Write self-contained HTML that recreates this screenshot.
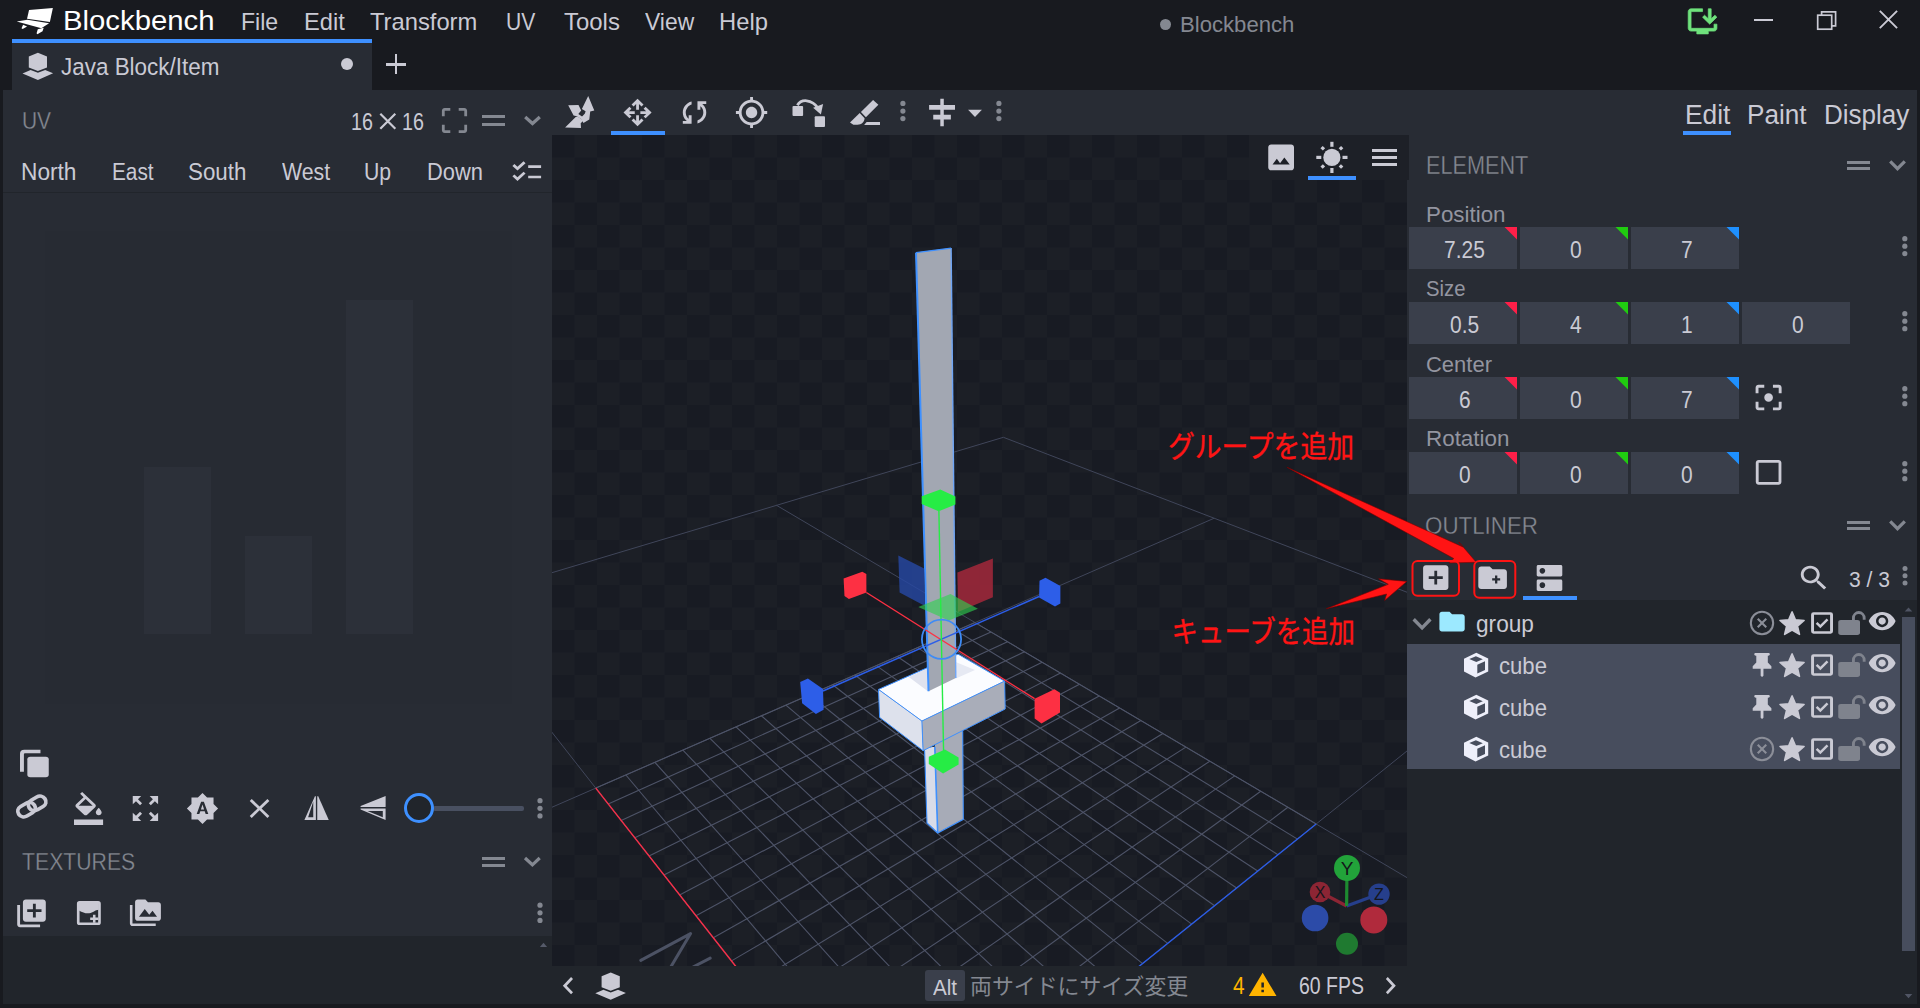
<!DOCTYPE html>
<html lang="en"><head><meta charset="utf-8"><title>Blockbench</title>
<style>
html,body{margin:0;padding:0;background:#181a1f;overflow:hidden}
#r{position:relative;width:1920px;height:1008px;overflow:hidden;font-family:"Liberation Sans","Noto Sans CJK JP",sans-serif;background:#181a1f}
.t{position:absolute;white-space:nowrap;line-height:1em;transform-origin:0 50%;display:block}
.lt{-webkit-text-stroke:0.3px #282c34}
.b{position:absolute}
.i{position:absolute;display:block;overflow:visible}
.jp{font-family:"Liberation Sans","Noto Sans CJK JP",sans-serif}
</style></head>
<body><div id="r">
<div class="b" style="left:0px;top:0px;width:1920px;height:90px;background:#181a1f;"></div>
<div class="b" style="left:12px;top:39px;width:360px;height:51px;background:#282c34;"></div>
<div class="b" style="left:12px;top:38.7px;width:360px;height:4.5px;background:#3e90ff;"></div>
<svg class="i" style="left:0;top:0;width:1px;height:1px;"><polygon points="29.05,9.92 52.86,7.94 49.88,22.02 27.06,18.65" fill="#ffffff"/><polygon points="16.75,21.43 27.46,19.64 49.09,23.21 41.35,28.17" fill="#ffffff"/><polygon points="23.10,24.80 27.06,26.39 22.70,28.97 21.50,28.37" fill="#ffffff"/><polygon points="37.78,29.37 43.73,27.78 42.54,31.35 37.38,34.13 36.59,33.33" fill="#ffffff"/></svg>
<span class="t " style="left:63.0px;top:7.00px;font-size:27.18px;color:#ffffff;transform:scaleX(1.0781);">Blockbench</span>
<span class="t " style="left:241.1px;top:10.00px;font-size:23.84px;color:#cacad4;transform:scaleX(0.9685);">File</span>
<span class="t " style="left:303.7px;top:10.00px;font-size:23.84px;color:#cacad4;transform:scaleX(0.9933);">Edit</span>
<span class="t " style="left:369.5px;top:10.00px;font-size:23.84px;color:#cacad4;transform:scaleX(0.9960);">Transform</span>
<span class="t " style="left:506.4px;top:10.00px;font-size:23.84px;color:#cacad4;transform:scaleX(0.8848);">UV</span>
<span class="t " style="left:564.4px;top:10.00px;font-size:23.84px;color:#cacad4;transform:scaleX(1.0045);">Tools</span>
<span class="t " style="left:644.5px;top:10.00px;font-size:23.84px;color:#cacad4;transform:scaleX(0.9602);">View</span>
<span class="t " style="left:718.5px;top:10.00px;font-size:23.84px;color:#cacad4;transform:scaleX(0.9974);">Help</span>
<div class="b" style="left:1160.4px;top:19.4px;width:10.8px;height:10.8px;border-radius:50%;background:#848891"></div>
<span class="t " style="left:1179.8px;top:14.00px;font-size:21.80px;color:#848891;transform:scaleX(1.0149);">Blockbench</span>
<svg class="i" style="left:0;top:0;width:1px;height:1px;"><polygon points="37.90,52.70 47.00,56.40 47.00,67.40 37.90,70.90 28.80,67.40 28.80,56.40" fill="#cacad4"/><polygon points="22.50,73.50 30.60,69.90 37.90,72.70 45.20,69.90 53.10,73.20 37.90,80.00" fill="#cacad4"/></svg>
<span class="t " style="left:61.2px;top:56.00px;font-size:23.55px;color:#cacad4;transform:scaleX(0.9531);">Java Block/Item</span>
<div class="b" style="left:341.2px;top:58.4px;width:12px;height:12px;border-radius:50%;background:#cacad4"></div>
<div class="b" style="left:386.2px;top:63px;width:19.600000000000023px;height:2.799999999999997px;background:#cacad4;"></div><div class="b" style="left:394.6px;top:54.4px;width:2.7999999999999545px;height:19.6px;background:#cacad4;"></div>
<svg class="i" style="left:0;top:0;width:1px;height:1px;" fill="#6fe27c" color="#6fe27c"><g transform="translate(1685.33,4.62) scale(1.4350,1.3944)"><path d="M20 17H4V5h8V3H4c-1.110 0-2 .890-2 2v12c0 1.100.890 2 2 2h4v2h8v-2h4c1.100 0 2-.900 2-2v-3h-2v3z M17 14l5-5-1.410-1.410L18 10.170V3h-2v7.170l-2.590-2.580L12 9z" stroke="currentColor" stroke-width="0.500" stroke-linejoin="round"/></g></svg>
<div class="b" style="left:1754.2px;top:19px;width:18.799999999999955px;height:2px;background:#cacad4;"></div>
<svg class="i" style="left:0;top:0;width:1px;height:1px;"><g fill="none" stroke="#cacad4" stroke-width="1.7"><rect x="1817.7" y="15.2" width="14" height="14"/><path d="M1821.6 15.2v-3.400h14v14h-3.900"/></g></svg>
<svg class="i" style="left:0;top:0;width:1px;height:1px;"><path d="M1879.800 10.900l17.300 17.300M1897.100 10.900l-17.300 17.300" fill="none" stroke="#cacad4" stroke-width="1.900"/></svg>
<div class="b" style="left:0px;top:90px;width:3px;height:918px;background:#181a1f;"></div>
<div class="b" style="left:3px;top:90px;width:549px;height:846px;background:#282c34;"></div>
<div class="b" style="left:3px;top:936px;width:549px;height:68px;background:#21252b;"></div>
<span class="t lt" style="left:21.9px;top:109.00px;font-size:24.71px;color:#848891;transform:scaleX(0.8477);">UV</span>
<span class="t " style="left:350.8px;top:110.00px;font-size:24.13px;color:#cacad4;transform:scaleX(0.8160);">16</span>
<span class="t " style="left:402.2px;top:110.00px;font-size:24.13px;color:#cacad4;transform:scaleX(0.8160);">16</span>
<svg class="i" style="left:0;top:0;width:1px;height:1px;"><path d="M380.300 113.700l15 15M395.300 113.700l-15 15" stroke="#cacad4" stroke-width="2.200"/></svg>
<svg class="i" style="left:0;top:0;width:1px;height:1px;" fill="#848891" color="#848891"><g transform="translate(437.70,103.97) scale(1.4000,1.3778)"><path d="M3 5v4h2V5h4V3H5c-1.1 0-2 .9-2 2zm2 10H3v4c0 1.1.9 2 2 2h4v-2H5v-4zm14 4h-4v2h4c1.1 0 2-.9 2-2v-4h-2v4zm0-16h-4v2h4v4h2V5c0-1.1-.9-2-2-2z"/></g></svg>
<div class="b" style="left:482.2px;top:115.2px;width:22.69999999999999px;height:3.0px;background:#848891;"></div><div class="b" style="left:482.2px;top:122.5px;width:22.69999999999999px;height:3.0px;background:#848891;"></div>
<svg class="i" style="left:0;top:0;width:1px;height:1px;"><path d="M525.2 117.0L532.5 123.5L539.8 117.0" fill="none" stroke="#848891" stroke-width="3.2" stroke-linejoin="miter"/></svg>
<span class="t " style="left:21.1px;top:160.00px;font-size:23.98px;color:#cacad4;transform:scaleX(0.9463);">North</span>
<span class="t " style="left:112.3px;top:160.00px;font-size:23.98px;color:#cacad4;transform:scaleX(0.8669);">East</span>
<span class="t " style="left:188.1px;top:160.00px;font-size:23.98px;color:#cacad4;transform:scaleX(0.9318);">South</span>
<span class="t " style="left:281.8px;top:160.00px;font-size:23.98px;color:#cacad4;transform:scaleX(0.8894);">West</span>
<span class="t " style="left:364.4px;top:160.00px;font-size:23.98px;color:#cacad4;transform:scaleX(0.8872);">Up</span>
<span class="t " style="left:427.1px;top:160.00px;font-size:23.98px;color:#cacad4;transform:scaleX(0.9117);">Down</span>
<svg class="i" style="left:0;top:0;width:1px;height:1px;" fill="#cacad4" color="#cacad4"><g transform="translate(509.53,156.19) scale(1.4350,1.3006)"><path d="M22 7h-9v2h9V7zm0 8h-9v2h9v-2zM5.54 11L2 7.46l1.41-1.41 2.12 2.12 4.24-4.24 1.41 1.41L5.54 11zm0 8L2 15.46l1.41-1.41 2.12 2.12 4.24-4.24 1.41 1.41L5.54 19z"/></g></svg>
<div class="b" style="left:3px;top:191.5px;width:549px;height:1.5px;background:#21252b;"></div>
<div class="b" style="left:45px;top:231px;width:467px;height:473px;background:#272b33;"></div>
<div class="b" style="left:144px;top:467px;width:67px;height:167px;background:#2c3039;"></div>
<div class="b" style="left:245px;top:536px;width:67px;height:98px;background:#2c3039;"></div>
<div class="b" style="left:346px;top:300px;width:67px;height:334px;background:#2c3039;"></div>
<svg class="i" style="left:0;top:0;width:1px;height:1px;" fill="#cacad4" color="#cacad4"><g transform="translate(15.94,746.69) scale(1.5625,1.4212)"><path d="M2.600 17.700V4.900A2.750 2.750 0 0 1 5.350 2.150H15.700v2.500H5.800a.700.700 0 0 0-.700.700V17.700z"/><rect x="7.300" y="7" width="13.700" height="14.500" rx="1.900"/></g></svg>
<svg class="i" style="left:0;top:0;width:1px;height:1px;" fill="#cacad4" color="#cacad4"><g transform="translate(14.02,789.65) scale(1.4855,1.4040)"><g fill="none" stroke="currentColor" stroke-width="2.600" transform="rotate(-32 12 12)"><rect x="1.600" y="8" width="12.400" height="8" rx="4"/><rect x="10" y="8" width="12.400" height="8" rx="4"/></g></g></svg>
<svg class="i" style="left:0;top:0;width:1px;height:1px;" fill="#cacad4" color="#cacad4"><g transform="translate(71.09,791.90) scale(1.4550,1.3792)"><path d="M16.56 8.94L7.62 0 6.21 1.41l2.38 2.38-5.15 5.15c-.59.59-.59 1.54 0 2.12l5.5 5.5c.29.29.68.44 1.06.44s.77-.15 1.06-.44l5.5-5.5c.59-.58.59-1.53 0-2.12zM5.21 10L10 5.21 14.79 10H5.21zM19 11.5s-2 2.17-2 3.5c0 1.1.9 2 2 2s2-.9 2-2c0-1.33-2-3.5-2-3.5zM2 20h20v4H2z"/></g></svg>
<svg class="i" style="left:0;top:0;width:1px;height:1px;" fill="#cacad4" color="#cacad4"><g transform="translate(128.53,791.83) scale(1.4083,1.3889)"><path d="M15 3l2.3 2.3-2.89 2.87 1.42 1.42L18.7 6.7 21 9V3h-6zM3 9l2.3-2.3 2.87 2.89 1.42-1.42L6.7 5.3 9 3H3v6zm6 12l-2.3-2.3 2.89-2.87-1.42-1.42L5.3 17.3 3 15v6h6zm12-6l-2.3 2.3-2.87-2.89-1.42 1.42 2.89 2.87L15 21h6v-6z"/></g></svg>
<svg class="i" style="left:0;top:0;width:1px;height:1px;" fill="#cacad4" color="#cacad4"><g transform="translate(185.95,792.16) scale(1.3793,1.3660)"><path d="M10.85 12.65h2.3L12 9l-1.15 3.65zM20 8.69V4h-4.69L12 .69 8.69 4H4v4.69L.69 12 4 15.31V20h4.69L12 23.31 15.31 20H20v-4.69L23.31 12 20 8.69zM14.3 16l-.7-2h-3.2l-.7 2H7.8L11 7h2l3.2 9h-1.9z"/></g></svg>
<svg class="i" style="left:0;top:0;width:1px;height:1px;" fill="#cacad4" color="#cacad4"><g transform="translate(242.73,792.25) scale(1.4036,1.3500)"><path d="M19 6.41L17.59 5 12 10.59 6.41 5 5 6.41 10.59 12 5 17.59 6.41 19 12 13.41 17.59 19 19 17.59 13.41 12z"/></g></svg>
<svg class="i" style="left:0;top:0;width:1px;height:1px;" fill="#cacad4" color="#cacad4"><g transform="translate(299.97,791.36) scale(1.3835,1.3971)"><path d="M10.800 3.500h.7v17H3.200z M9.600 7.200L5.900 18.600h3.700z" fill-rule="evenodd"/><path d="M12.500 3.500h.7l7.600 17h-8.300z"/></g></svg>
<svg class="i" style="left:0;top:0;width:1px;height:1px;" fill="#cacad4" color="#cacad4"><g transform="translate(355.45,791.14) scale(1.4706,1.3873)"><path d="M20.500 11.500v-8l-17 7.300v.7z"/><path d="M20.500 12.500v8.300l-17-7.600v-.7z M18.600 14.400H8.200l10.400 4.400z" fill-rule="evenodd"/></g></svg>
<div class="b" style="left:433px;top:805.6px;width:91px;height:5.399999999999977px;background:#495061;border-radius:2px"></div>
<div class="b" style="left:404.1px;top:792.7px;width:30.2px;height:30.2px;border-radius:50%;box-sizing:border-box;border:3.8px solid #3e90ff;background:#21252b"></div>
<svg class="i" style="left:0;top:0;width:1px;height:1px;"><circle cx="540" cy="800.7" r="2.6" fill="#848891"/><circle cx="540" cy="808.3" r="2.6" fill="#848891"/><circle cx="540" cy="815.9" r="2.6" fill="#848891"/></svg>
<span class="t lt" style="left:21.7px;top:850.00px;font-size:24.27px;color:#848891;transform:scaleX(0.8750);">TEXTURES</span>
<div class="b" style="left:482.3px;top:856.7px;width:22.69999999999999px;height:3.0px;background:#848891;"></div><div class="b" style="left:482.3px;top:863.9px;width:22.69999999999999px;height:3.0px;background:#848891;"></div>
<svg class="i" style="left:0;top:0;width:1px;height:1px;"><path d="M525.0 858.0L532.4 864.8L539.7 858.0" fill="none" stroke="#848891" stroke-width="3.2" stroke-linejoin="miter"/></svg>
<svg class="i" style="left:0;top:0;width:1px;height:1px;" fill="#cacad4" color="#cacad4"><g transform="translate(14.34,896.84) scale(1.4300,1.3800)"><path d="M4 6H2v14c0 1.1.9 2 2 2h14v-2H4V6zm16-4H8c-1.1 0-2 .9-2 2v12c0 1.1.9 2 2 2h12c1.1 0 2-.9 2-2V4c0-1.1-.9-2-2-2zm-1 9h-4v4h-2v-4H9V9h4V5h2v4h4v2z"/></g></svg>
<svg class="i" style="left:0;top:0;width:1px;height:1px;" fill="#cacad4" color="#cacad4"><g transform="translate(72.92,897.10) scale(1.3278,1.3333)"><path fill-rule="evenodd" d="M5 3h14a2 2 0 0 1 2 2v14a2 2 0 0 1-2 2H5a2 2 0 0 1-2-2V5a2 2 0 0 1 2-2z M5 5v14h14V5z"/><path d="M4.500 4.500h15v5c-3 .2-4.200 2.300-7.200 2.600C9.300 12.400 7.500 11.500 4.500 10z"/><path d="M15.100 13.200h1.900v2.100h2.100v1.900h-2.100v2.100h-1.900v-2.100h-2.100v-1.900h2.100z"/></g></svg>
<svg class="i" style="left:0;top:0;width:1px;height:1px;" fill="#cacad4" color="#cacad4"><g transform="translate(129.90,896.95) scale(1.2917,1.3250)"><path d="M2 6H0v5h.01L0 20c0 1.1.9 2 2 2h18v-2H2V6zm20-2h-8l-2-2H6c-1.1 0-1.99.9-1.99 2L4 16c0 1.1.9 2 2 2h16c1.1 0 2-.9 2-2V6c0-1.1-.9-2-2-2zM7 15l4.5-6 3.5 4.51 2.5-3.01L21 15H7z"/></g></svg>
<svg class="i" style="left:0;top:0;width:1px;height:1px;"><circle cx="540" cy="905.2" r="2.6" fill="#848891"/><circle cx="540" cy="912.8" r="2.6" fill="#848891"/><circle cx="540" cy="920.4" r="2.6" fill="#848891"/></svg>
<svg class="i" style="left:0;top:0;width:1px;height:1px;"><path d="M539.900 947l3.600-4.200 3.600 4.200z" fill="#555a69"/></svg>
<div class="b" style="left:552px;top:90px;width:855px;height:45px;background:#282c34;"></div>
<div class="b" style="left:611px;top:130.6px;width:54px;height:4.400000000000006px;background:#3e90ff;"></div>
<svg class="i" style="left:0;top:0;width:1px;height:1px;"><polygon points="588.20,95.90 594.30,110.60 590.20,111.60 589.30,119.60 583.40,122.90 581.20,117.40 584.90,113.60 585.60,111.20 581.90,109.00" fill="#cacad4"/><polygon points="568.20,105.30 578.50,105.10 581.20,110.60 578.30,114.00 583.90,117.70 582.60,120.00 576.90,116.20 573.60,115.40" fill="#cacad4"/><polygon points="565.10,127.40 581.00,127.90 580.70,123.30 583.60,120.60 577.50,116.60 575.70,116.90" fill="#cacad4"/></svg>
<svg class="i" style="left:0;top:0;width:1px;height:1px;" fill="#cacad4" color="#cacad4"><g transform="translate(620.69,96.00) scale(1.4050,1.3750)"><path d="M12 22L7.750 17.750l1.425-1.425L11 18.150V14h2v4.125l1.800-1.825 1.450 1.450z M6.250 16.250L2 12l4.225-4.225L7.650 9.200 5.850 11H10v2H5.875L7.700 14.800z M17.750 16.250l-1.425-1.425L18.150 13H14v-2h4.125L16.300 9.200l1.450-1.450L22 12z M11 10V5.850L9.175 7.675 7.750 6.250 12 2l4.250 4.250-1.425 1.425L13 5.850V10z"/></g></svg>
<svg class="i" style="left:0;top:0;width:1px;height:1px;" fill="#cacad4" color="#cacad4"><g transform="translate(676.94,95.62) scale(1.4656,1.4062)"><path d="M4 20v-2h2.75l-.4-.35C5.480 16.880 4.880 16 4.520 15.020 4.170 14.040 4 13.050 4 12.050c0-1.850.550-3.500 1.660-4.940C6.770 5.670 8.220 4.720 10 4.250v2.100c-1.200.430-2.170 1.170-2.900 2.210C6.370 9.600 6 10.770 6 12.050c0 .750.140 1.480.420 2.190.290.710.730 1.360 1.330 1.960l.250.250V14h2v6zm10-.250v-2.100c1.200-.430 2.170-1.170 2.900-2.210.730-1.040 1.100-2.210 1.100-3.490 0-.750-.140-1.480-.420-2.190-.290-.710-.730-1.360-1.330-1.960l-.250-.250V10h-2V4h6v2h-2.750l.4.350c.820.820 1.410 1.710 1.790 2.660.370.960.560 1.940.560 2.940 0 1.850-.550 3.500-1.660 4.940-1.110 1.440-2.560 2.390-4.340 2.860z"/></g></svg>
<svg class="i" style="left:0;top:0;width:1px;height:1px;" fill="#cacad4" color="#cacad4"><g transform="translate(734.48,95.48) scale(1.4227,1.4182)"><path d="M12 8c-2.21 0-4 1.79-4 4s1.79 4 4 4 4-1.79 4-4-1.79-4-4-4zm8.94 3c-.46-4.17-3.77-7.48-7.94-7.94V1h-2v2.06C6.83 3.52 3.52 6.83 3.06 11H1v2h2.06c.46 4.17 3.77 7.48 7.94 7.94V23h2v-2.06c4.17-.46 7.48-3.77 7.94-7.94H23v-2h-2.06zM12 19c-3.87 0-7-3.13-7-7s3.13-7 7-7 7 3.13 7 7-3.13 7-7 7z"/></g></svg>
<svg class="i" style="left:0;top:0;width:1px;height:1px;"><rect x="792.5" y="105.9" width="10.600" height="10" rx="1" fill="#cacad4"/><rect x="814.7" y="116.250" width="10.300" height="10.650" rx="1" fill="#cacad4"/><path d="M797.400 105.200C801 99 811.500 98.500 818.500 108.500" fill="none" stroke="#cacad4" stroke-width="2.800"/><polygon points="813.10,107.80 823.10,104.10 820.90,114.40" fill="#cacad4"/></svg>
<svg class="i" style="left:0;top:0;width:1px;height:1px;"><polygon points="873.10,100.00 878.40,104.70 865.90,117.20 860.90,111.90" fill="#cacad4"/><path d="M859.700 113.100L864.600 118.300C864.200 122.500 861.500 124.700 857.500 124.700H853.400L850 122.500z" fill="#cacad4"/><polygon points="866.60,121.90 880.00,121.90 880.00,125.00 864.10,125.00" fill="#cacad4"/></svg>
<svg class="i" style="left:0;top:0;width:1px;height:1px;"><circle cx="902.9" cy="103.4" r="2.6" fill="#848891"/><circle cx="902.9" cy="111.1" r="2.6" fill="#848891"/><circle cx="902.9" cy="118.6" r="2.6" fill="#848891"/></svg>
<svg class="i" style="left:0;top:0;width:1px;height:1px;" fill="#cacad4" color="#cacad4"><g transform="translate(925.63,96.00) scale(1.3351,1.3750)"><path d="M11 2h2.600v4.600h8.400v3.400h-8.400v3.600h5.300v3.400h-5.300V22H11v-5H5.700v-3.400H11V10H2.600V6.600H11z"/></g></svg>
<svg class="i" style="left:0;top:0;width:1px;height:1px;"><polygon points="968.10,109.70 981.90,109.70 975.00,116.90" fill="#cacad4"/></svg>
<svg class="i" style="left:0;top:0;width:1px;height:1px;"><circle cx="998.9" cy="103.4" r="2.6" fill="#848891"/><circle cx="998.9" cy="111.1" r="2.6" fill="#848891"/><circle cx="998.9" cy="118.6" r="2.6" fill="#848891"/></svg>
<div class="b" style="left:552px;top:966px;width:855px;height:38px;background:#21252b;"></div>
<svg class="i" style="left:0;top:0;width:1px;height:1px;" fill="#cacad4" color="#cacad4"><g transform="translate(551.79,968.35) scale(1.3765,1.4417)"><path d="M15.41 7.41L14 6l-6 6 6 6 1.41-1.41L10.83 12z"/></g></svg>
<svg class="i" style="left:0;top:0;width:1px;height:1px;"><polygon points="610.70,972.50 619.80,976.20 619.80,987.20 610.70,990.70 601.60,987.20 601.60,976.20" fill="#cacad4"/><polygon points="595.30,993.30 603.40,989.70 610.70,992.50 618.00,989.70 625.90,993.00 610.70,999.80" fill="#cacad4"/></svg>
<svg class="i" style="left:0;top:0;width:1px;height:1px;" fill="#cacad4" color="#cacad4"><g transform="translate(1374.42,968.35) scale(1.3360,1.4417)"><path d="M10 6L8.59 7.41 13.17 12l-4.58 4.59L10 18l6-6z"/></g></svg>
<div class="b" style="left:925.2px;top:970px;width:40.0px;height:31.200000000000045px;background:#3a3f4b;border-radius:3px"></div>
<span class="t " style="left:933.1px;top:977.00px;font-size:21.80px;color:#cacad4;transform:scaleX(0.9472);">Alt</span>
<span class="t jp" style="left:970.0px;top:976.00px;font-size:21.90px;color:#848891;transform:scaleX(1.0000);">両サイドにサイズ変更</span>
<span class="t " style="left:1232.8px;top:975.00px;font-size:23.55px;color:#ffb400;transform:scaleX(0.8858);">4</span>
<svg class="i" style="left:0;top:0;width:1px;height:1px;" fill="#ffb400" color="#ffb400"><g transform="translate(1247.54,970.25) scale(1.2591,1.2263)"><path d="M1 21h22L12 2 1 21zm12-3h-2v-2h2v2zm0-4h-2v-4h2v4z"/></g></svg>
<span class="t " style="left:1299.0px;top:975.00px;font-size:23.55px;color:#cacad4;transform:scaleX(0.8277);">60 FPS</span>
<div class="b" style="left:1407px;top:90px;width:510px;height:510px;background:#282c34;"></div>
<div class="b" style="left:1917px;top:90px;width:3px;height:918px;background:#181a1f;"></div>
<div class="b" style="left:1407px;top:600px;width:510px;height:404px;background:#21252b;"></div>
<div class="b" style="left:0px;top:1004px;width:1920px;height:4px;background:#181a1f;"></div>
<span class="t " style="left:1685.0px;top:100.00px;font-size:28.20px;color:#cacad4;transform:scaleX(0.9343);">Edit</span>
<span class="t " style="left:1747.3px;top:100.00px;font-size:28.20px;color:#cacad4;transform:scaleX(0.9273);">Paint</span>
<span class="t " style="left:1823.8px;top:100.00px;font-size:28.20px;color:#cacad4;transform:scaleX(0.9237);">Display</span>
<div class="b" style="left:1683px;top:130.7px;width:48.40000000000009px;height:4.5px;background:#3e90ff;"></div>
<span class="t lt" style="left:1426.3px;top:154.00px;font-size:24.85px;color:#848891;transform:scaleX(0.8714);">ELEMENT</span>
<div class="b" style="left:1847.1px;top:160.7px;width:22.800000000000182px;height:3.0px;background:#848891;"></div><div class="b" style="left:1847.1px;top:167.3px;width:22.800000000000182px;height:3.0px;background:#848891;"></div>
<svg class="i" style="left:0;top:0;width:1px;height:1px;"><path d="M1890.2 161.4L1897.5 168.7L1904.8 161.4" fill="none" stroke="#848891" stroke-width="3.2" stroke-linejoin="miter"/></svg>
<span class="t " style="left:1425.7px;top:204.00px;font-size:22.53px;color:#9395a0;transform:scaleX(0.9931);">Position</span>
<div class="b" style="left:1409px;top:227px;width:108px;height:42px;background:#3a3f4b;"></div>
<svg class="i" style="left:0;top:0;width:1px;height:1px;"><path d="M1504.5 227h12.500v12.500z" fill="#ff1f48"/></svg>
<span class="t " style="left:1444.1px;top:239.00px;font-size:23.30px;color:#cacad4;transform:scaleX(0.9000);">7.25</span>
<div class="b" style="left:1520px;top:227px;width:108px;height:42px;background:#3a3f4b;"></div>
<svg class="i" style="left:0;top:0;width:1px;height:1px;"><path d="M1615.5 227h12.500v12.500z" fill="#20cc10"/></svg>
<span class="t " style="left:1569.7px;top:239.00px;font-size:23.30px;color:#cacad4;transform:scaleX(0.9000);">0</span>
<div class="b" style="left:1631px;top:227px;width:108px;height:42px;background:#3a3f4b;"></div>
<svg class="i" style="left:0;top:0;width:1px;height:1px;"><path d="M1726.5 227h12.500v12.500z" fill="#1e90ff"/></svg>
<span class="t " style="left:1680.7px;top:239.00px;font-size:23.30px;color:#cacad4;transform:scaleX(0.9000);">7</span>
<svg class="i" style="left:0;top:0;width:1px;height:1px;"><circle cx="1904.8" cy="238.7" r="2.6" fill="#848891"/><circle cx="1904.8" cy="246.2" r="2.6" fill="#848891"/><circle cx="1904.8" cy="253.7" r="2.6" fill="#848891"/></svg>
<span class="t " style="left:1425.7px;top:278.00px;font-size:22.53px;color:#9395a0;transform:scaleX(0.9013);">Size</span>
<div class="b" style="left:1409px;top:302px;width:108px;height:42px;background:#3a3f4b;"></div>
<svg class="i" style="left:0;top:0;width:1px;height:1px;"><path d="M1504.5 302h12.500v12.500z" fill="#ff1f48"/></svg>
<span class="t " style="left:1449.9px;top:314.00px;font-size:23.30px;color:#cacad4;transform:scaleX(0.9000);">0.5</span>
<div class="b" style="left:1520px;top:302px;width:108px;height:42px;background:#3a3f4b;"></div>
<svg class="i" style="left:0;top:0;width:1px;height:1px;"><path d="M1615.5 302h12.500v12.500z" fill="#20cc10"/></svg>
<span class="t " style="left:1569.7px;top:314.00px;font-size:23.30px;color:#cacad4;transform:scaleX(0.9000);">4</span>
<div class="b" style="left:1631px;top:302px;width:108px;height:42px;background:#3a3f4b;"></div>
<svg class="i" style="left:0;top:0;width:1px;height:1px;"><path d="M1726.5 302h12.500v12.500z" fill="#1e90ff"/></svg>
<span class="t " style="left:1680.7px;top:314.00px;font-size:23.30px;color:#cacad4;transform:scaleX(0.9000);">1</span>
<div class="b" style="left:1742px;top:302px;width:108px;height:42px;background:#3a3f4b;"></div>
<span class="t " style="left:1791.7px;top:314.00px;font-size:23.30px;color:#cacad4;transform:scaleX(0.9000);">0</span>
<svg class="i" style="left:0;top:0;width:1px;height:1px;"><circle cx="1904.8" cy="313.7" r="2.6" fill="#848891"/><circle cx="1904.8" cy="321.2" r="2.6" fill="#848891"/><circle cx="1904.8" cy="328.7" r="2.6" fill="#848891"/></svg>
<span class="t " style="left:1425.7px;top:354.00px;font-size:22.53px;color:#9395a0;transform:scaleX(0.9760);">Center</span>
<div class="b" style="left:1409px;top:377px;width:108px;height:42px;background:#3a3f4b;"></div>
<svg class="i" style="left:0;top:0;width:1px;height:1px;"><path d="M1504.5 377h12.500v12.500z" fill="#ff1f48"/></svg>
<span class="t " style="left:1458.7px;top:389.00px;font-size:23.30px;color:#cacad4;transform:scaleX(0.9000);">6</span>
<div class="b" style="left:1520px;top:377px;width:108px;height:42px;background:#3a3f4b;"></div>
<svg class="i" style="left:0;top:0;width:1px;height:1px;"><path d="M1615.5 377h12.500v12.500z" fill="#20cc10"/></svg>
<span class="t " style="left:1569.7px;top:389.00px;font-size:23.30px;color:#cacad4;transform:scaleX(0.9000);">0</span>
<div class="b" style="left:1631px;top:377px;width:108px;height:42px;background:#3a3f4b;"></div>
<svg class="i" style="left:0;top:0;width:1px;height:1px;"><path d="M1726.5 377h12.500v12.500z" fill="#1e90ff"/></svg>
<span class="t " style="left:1680.7px;top:389.00px;font-size:23.30px;color:#cacad4;transform:scaleX(0.9000);">7</span>
<svg class="i" style="left:0;top:0;width:1px;height:1px;" fill="#cacad4" color="#cacad4"><g transform="translate(1751.27,380.57) scale(1.4444,1.4111)"><path d="M5 15H3v4c0 1.1.9 2 2 2h4v-2H5v-4zM5 5h4V3H5c-1.1 0-2 .9-2 2v4h2V5zm14-2h-4v2h4v4h2V5c0-1.1-.9-2-2-2zm0 16h-4v2h4c1.1 0 2-.9 2-2v-4h-2v4zM12 9c-1.66 0-3 1.34-3 3s1.34 3 3 3 3-1.34 3-3-1.34-3-3-3z"/></g></svg>
<svg class="i" style="left:0;top:0;width:1px;height:1px;"><circle cx="1904.8" cy="388.7" r="2.6" fill="#848891"/><circle cx="1904.8" cy="396.2" r="2.6" fill="#848891"/><circle cx="1904.8" cy="403.7" r="2.6" fill="#848891"/></svg>
<span class="t " style="left:1425.7px;top:428.00px;font-size:22.53px;color:#9395a0;transform:scaleX(0.9951);">Rotation</span>
<div class="b" style="left:1409px;top:452px;width:108px;height:42px;background:#3a3f4b;"></div>
<svg class="i" style="left:0;top:0;width:1px;height:1px;"><path d="M1504.5 452h12.500v12.500z" fill="#ff1f48"/></svg>
<span class="t " style="left:1458.7px;top:464.00px;font-size:23.30px;color:#cacad4;transform:scaleX(0.9000);">0</span>
<div class="b" style="left:1520px;top:452px;width:108px;height:42px;background:#3a3f4b;"></div>
<svg class="i" style="left:0;top:0;width:1px;height:1px;"><path d="M1615.5 452h12.500v12.500z" fill="#20cc10"/></svg>
<span class="t " style="left:1569.7px;top:464.00px;font-size:23.30px;color:#cacad4;transform:scaleX(0.9000);">0</span>
<div class="b" style="left:1631px;top:452px;width:108px;height:42px;background:#3a3f4b;"></div>
<svg class="i" style="left:0;top:0;width:1px;height:1px;"><path d="M1726.5 452h12.500v12.500z" fill="#1e90ff"/></svg>
<span class="t " style="left:1680.7px;top:464.00px;font-size:23.30px;color:#cacad4;transform:scaleX(0.9000);">0</span>
<svg class="i" style="left:0;top:0;width:1px;height:1px;" fill="#cacad4" color="#cacad4"><g transform="translate(1751.53,455.87) scale(1.4222,1.3778)"><path d="M19 5v14H5V5h14m0-2H5c-1.1 0-2 .9-2 2v14c0 1.1.9 2 2 2h14c1.1 0 2-.9 2-2V5c0-1.1-.9-2-2-2z"/></g></svg>
<svg class="i" style="left:0;top:0;width:1px;height:1px;"><circle cx="1904.8" cy="463.7" r="2.6" fill="#848891"/><circle cx="1904.8" cy="471.2" r="2.6" fill="#848891"/><circle cx="1904.8" cy="478.7" r="2.6" fill="#848891"/></svg>
<span class="t lt" style="left:1425.3px;top:514.00px;font-size:24.56px;color:#848891;transform:scaleX(0.9106);">OUTLINER</span>
<div class="b" style="left:1847.1px;top:520.7px;width:22.800000000000182px;height:3.0px;background:#848891;"></div><div class="b" style="left:1847.1px;top:527.3px;width:22.800000000000182px;height:3.0px;background:#848891;"></div>
<svg class="i" style="left:0;top:0;width:1px;height:1px;"><path d="M1890.2 521.4L1897.5 528.7L1904.8 521.4" fill="none" stroke="#848891" stroke-width="3.2" stroke-linejoin="miter"/></svg>
<svg class="i" style="left:0;top:0;width:1px;height:1px;" fill="#cacad4" color="#cacad4"><g transform="translate(1418.88,561.07) scale(1.4056,1.3778)"><path d="M19 3H5c-1.11 0-2 .9-2 2v14c0 1.1.89 2 2 2h14c1.1 0 2-.9 2-2V5c0-1.1-.9-2-2-2zm-2 10h-4v4h-2v-4H7v-2h4V7h2v4h4v2z"/></g></svg>
<svg class="i" style="left:0;top:0;width:1px;height:1px;fill-rule:evenodd" fill="#cacad4" color="#cacad4"><g transform="translate(1475.44,560.72) scale(1.4300,1.4188)"><path d="M4 4c-1.100 0-1.990.900-1.990 2L2 18c0 1.100.900 2 2 2h16c1.100 0 2-.900 2-2V8c0-1.100-.900-2-2-2h-8l-2-2z M13.700 10.400h1.600v2h2v1.600h-2v2h-1.600v-2h-2v-1.600h2z"/></g></svg>
<svg class="i" style="left:0;top:0;width:1px;height:1px;" fill="#cacad4" color="#cacad4"><g transform="translate(1532.43,560.67) scale(1.4222,1.4444)"><path d="M20 13H4c-.55 0-1 .45-1 1v6c0 .55.45 1 1 1h16c.55 0 1-.45 1-1v-6c0-.55-.45-1-1-1zM7 19c-1.1 0-2-.9-2-2s.9-2 2-2 2 .9 2 2-.9 2-2 2zM20 3H4c-.55 0-1 .45-1 1v6c0 .55.45 1 1 1h16c.55 0 1-.45 1-1V4c0-.55-.45-1-1-1zM7 9c-1.1 0-2-.9-2-2s.9-2 2-2 2 .9 2 2-.9 2-2 2z"/></g></svg>
<div class="b" style="left:1523px;top:596px;width:54px;height:4px;background:#3e90ff;"></div>
<svg class="i" style="left:0;top:0;width:1px;height:1px;" fill="#cacad4" color="#cacad4"><g transform="translate(1796.43,561.75) scale(1.4551,1.3493)"><path d="M15.5 14h-.79l-.28-.27C15.41 12.59 16 11.11 16 9.5 16 5.91 13.09 3 9.5 3S3 5.91 3 9.5 5.91 16 9.5 16c1.61 0 3.09-.59 4.23-1.57l.27.28v.79l5 4.99L20.49 19l-4.99-5zm-6 0C7.01 14 5 11.99 5 9.5S7.01 5 9.5 5 14 7.01 14 9.5 11.99 14 9.5 14z"/></g></svg>
<span class="t " style="left:1848.8px;top:569.00px;font-size:22.24px;color:#cacad4;transform:scaleX(0.9487);">3 / 3</span>
<svg class="i" style="left:0;top:0;width:1px;height:1px;"><circle cx="1905" cy="568.5" r="2.5" fill="#848891"/><circle cx="1905" cy="575.8" r="2.5" fill="#848891"/><circle cx="1905" cy="583.1" r="2.5" fill="#848891"/></svg>
<div class="b" style="left:1407px;top:643.6px;width:493px;height:125.79999999999995px;background:#474d5d;"></div>
<div class="b" style="left:1902px;top:617px;width:12.799999999999955px;height:333.6px;background:#474d5d;"></div>
<svg class="i" style="left:0;top:0;width:1px;height:1px;"><path d="M1904.700 611.600l3.800-4.200 3.800 4.200z M1904.700 994l3.800 4.200 3.800-4.200z" fill="#505564"/></svg>
<svg class="i" style="left:0;top:0;width:1px;height:1px;"><path d="M1413.7 619.3L1422.1 627.9L1430.4 619.3" fill="none" stroke="#848891" stroke-width="3.4" stroke-linejoin="miter"/></svg>
<svg class="i" style="left:0;top:0;width:1px;height:1px;" fill="#9ce9ff" color="#9ce9ff"><g transform="translate(1436.87,606.78) scale(1.2650,1.2312)"><path d="M10 4H4c-1.1 0-1.99.9-1.99 2L2 18c0 1.1.9 2 2 2h16c1.1 0 2-.9 2-2V8c0-1.1-.9-2-2-2h-8l-2-2z"/></g></svg>
<span class="t " style="left:1475.5px;top:613.00px;font-size:23.55px;color:#cacad4;transform:scaleX(0.9614);">group</span>
<svg class="i" style="left:0;top:0;width:1px;height:1px;" fill="#8b8e98" color="#8b8e98"><g transform="translate(1747.36,608.36) scale(1.2200,1.2200)"><path fill-rule="evenodd" d="M12 2a10 10 0 1 0 0 20a10 10 0 1 0 0-20z M12 3.700a8.300 8.300 0 1 1 0 16.600a8.300 8.300 0 1 1 0-16.600z"/><path d="M9.100 7.900L12 10.800l2.900-2.900 1.200 1.200L13.200 12l2.900 2.900-1.200 1.200L12 13.200 9.100 16.100 7.900 14.900 10.800 12 7.900 9.100z"/></g></svg>
<svg class="i" style="left:0;top:0;width:1px;height:1px;" fill="#cacad4" color="#cacad4"><g transform="translate(1777.59,609.53) scale(1.2050,1.1842)"><path d="M12 17.270L18.180 21l-1.640-7.030L22 9.240l-7.190-.610L12 2 9.190 8.630 2 9.240l5.460 4.730L5.820 21z" stroke="currentColor" stroke-width="1.300" stroke-linejoin="round"/></g></svg>
<svg class="i" style="left:0;top:0;width:1px;height:1px;" fill="#cacad4" color="#cacad4"><g transform="translate(1807.45,608.61) scale(1.2167,1.1972)"><path fill-rule="evenodd" d="M5 3h14a2 2 0 0 1 2 2v14a2 2 0 0 1-2 2H5a2 2 0 0 1-2-2V5a2 2 0 0 1 2-2z M5.400 5.100v13.800h13.200V5.100z"/><path d="M10.600 16.400L6.800 12.600l1.450-1.450 2.350 2.350 5.150-5.150L17.200 9.800z"/></g></svg>
<svg class="i" style="left:0;top:0;width:1px;height:1px;" fill="#7f838d" color="#7f838d"><g transform="translate(1832.25,609.10) scale(1.5000,1.2000)"><rect x="4" y="9" width="14.500" height="12.500" rx="1.800"/></g></svg>
<svg class="i" style="left:0;top:0;width:1px;height:1px;" fill="#7f838d" color="#7f838d"><g transform="translate(1835.00,609.00) scale(1.3600,1.4000)"><path d="M12.500 9V6.500a5 5 0 0 1 10 0V7.600h-2.100V6.500a2.900 2.900 0 0 0-5.800 0V9z"/></g></svg>
<svg class="i" style="left:0;top:0;width:1px;height:1px;" fill="#cacad4" color="#cacad4"><g transform="translate(1867.48,606.54) scale(1.2227,1.2133)"><path d="M12 4.5C7 4.5 2.73 7.61 1 12c1.73 4.39 6 7.5 11 7.5s9.27-3.11 11-7.5c-1.73-4.39-6-7.5-11-7.5zM12 17c-2.76 0-5-2.24-5-5s2.24-5 5-5 5 2.24 5 5-2.24 5-5 5zm0-8c-1.66 0-3 1.34-3 3s1.34 3 3 3 3-1.34 3-3-1.34-3-3-3z"/></g></svg>
<svg class="i" style="left:0;top:0;width:1px;height:1px;" fill="#cacad4" color="#cacad4"><g transform="translate(1743.35,648.79) scale(1.5583,1.3169)"><path d="M8 3.200c-.600 0-1 .400-1 1s.400 1 1 1h.300v5.300L6 13.200v1.900h5.100v5.400l.900 1 .900-1v-5.400H18v-1.900l-2.300-2.700V5.200h.300c.600 0 1-.400 1-1s-.400-1-1-1z"/></g></svg>
<svg class="i" style="left:0;top:0;width:1px;height:1px;" fill="#cacad4" color="#cacad4"><g transform="translate(1777.59,651.53) scale(1.2050,1.1842)"><path d="M12 17.270L18.180 21l-1.640-7.030L22 9.240l-7.190-.610L12 2 9.190 8.630 2 9.240l5.460 4.730L5.820 21z" stroke="currentColor" stroke-width="1.300" stroke-linejoin="round"/></g></svg>
<svg class="i" style="left:0;top:0;width:1px;height:1px;" fill="#cacad4" color="#cacad4"><g transform="translate(1807.45,650.61) scale(1.2167,1.1972)"><path fill-rule="evenodd" d="M5 3h14a2 2 0 0 1 2 2v14a2 2 0 0 1-2 2H5a2 2 0 0 1-2-2V5a2 2 0 0 1 2-2z M5.400 5.100v13.800h13.200V5.100z"/><path d="M10.600 16.400L6.800 12.600l1.450-1.450 2.350 2.350 5.150-5.150L17.200 9.800z"/></g></svg>
<svg class="i" style="left:0;top:0;width:1px;height:1px;" fill="#7f838d" color="#7f838d"><g transform="translate(1832.25,651.10) scale(1.5000,1.2000)"><rect x="4" y="9" width="14.500" height="12.500" rx="1.800"/></g></svg>
<svg class="i" style="left:0;top:0;width:1px;height:1px;" fill="#7f838d" color="#7f838d"><g transform="translate(1835.00,651.00) scale(1.3600,1.4000)"><path d="M12.500 9V6.500a5 5 0 0 1 10 0V7.600h-2.100V6.500a2.900 2.900 0 0 0-5.800 0V9z"/></g></svg>
<svg class="i" style="left:0;top:0;width:1px;height:1px;" fill="#cacad4" color="#cacad4"><g transform="translate(1867.48,648.54) scale(1.2227,1.2133)"><path d="M12 4.5C7 4.5 2.73 7.61 1 12c1.73 4.39 6 7.5 11 7.5s9.27-3.11 11-7.5c-1.73-4.39-6-7.5-11-7.5zM12 17c-2.76 0-5-2.24-5-5s2.24-5 5-5 5 2.24 5 5-2.24 5-5 5zm0-8c-1.66 0-3 1.34-3 3s1.34 3 3 3 3-1.34 3-3-1.34-3-3-3z"/></g></svg>
<svg class="i" style="left:0;top:0;width:1px;height:1px;"><polygon points="1476.30,652.80 1488.20,658.40 1488.20,671.50 1475.50,677.40 1464.00,671.50 1464.00,658.80" fill="#eeeffa"/><polygon points="1469.30,658.90 1475.90,656.30 1482.80,659.20 1476.30,661.90" fill="#474d5d"/><polygon points="1477.30,664.80 1485.00,661.30 1485.00,669.90 1477.30,673.40" fill="#474d5d"/></svg>
<span class="t " style="left:1498.9px;top:655.00px;font-size:23.69px;color:#cacad4;transform:scaleX(0.9343);">cube</span>
<svg class="i" style="left:0;top:0;width:1px;height:1px;" fill="#cacad4" color="#cacad4"><g transform="translate(1743.35,690.79) scale(1.5583,1.3169)"><path d="M8 3.200c-.600 0-1 .400-1 1s.400 1 1 1h.300v5.300L6 13.200v1.900h5.100v5.400l.900 1 .900-1v-5.400H18v-1.900l-2.300-2.700V5.200h.300c.600 0 1-.400 1-1s-.400-1-1-1z"/></g></svg>
<svg class="i" style="left:0;top:0;width:1px;height:1px;" fill="#cacad4" color="#cacad4"><g transform="translate(1777.59,693.53) scale(1.2050,1.1842)"><path d="M12 17.270L18.180 21l-1.640-7.030L22 9.240l-7.190-.610L12 2 9.190 8.630 2 9.240l5.460 4.730L5.820 21z" stroke="currentColor" stroke-width="1.300" stroke-linejoin="round"/></g></svg>
<svg class="i" style="left:0;top:0;width:1px;height:1px;" fill="#cacad4" color="#cacad4"><g transform="translate(1807.45,692.61) scale(1.2167,1.1972)"><path fill-rule="evenodd" d="M5 3h14a2 2 0 0 1 2 2v14a2 2 0 0 1-2 2H5a2 2 0 0 1-2-2V5a2 2 0 0 1 2-2z M5.400 5.100v13.800h13.200V5.100z"/><path d="M10.600 16.400L6.800 12.600l1.450-1.450 2.350 2.350 5.150-5.150L17.200 9.800z"/></g></svg>
<svg class="i" style="left:0;top:0;width:1px;height:1px;" fill="#7f838d" color="#7f838d"><g transform="translate(1832.25,693.10) scale(1.5000,1.2000)"><rect x="4" y="9" width="14.500" height="12.500" rx="1.800"/></g></svg>
<svg class="i" style="left:0;top:0;width:1px;height:1px;" fill="#7f838d" color="#7f838d"><g transform="translate(1835.00,693.00) scale(1.3600,1.4000)"><path d="M12.500 9V6.500a5 5 0 0 1 10 0V7.600h-2.100V6.500a2.900 2.900 0 0 0-5.800 0V9z"/></g></svg>
<svg class="i" style="left:0;top:0;width:1px;height:1px;" fill="#cacad4" color="#cacad4"><g transform="translate(1867.48,690.54) scale(1.2227,1.2133)"><path d="M12 4.5C7 4.5 2.73 7.61 1 12c1.73 4.39 6 7.5 11 7.5s9.27-3.11 11-7.5c-1.73-4.39-6-7.5-11-7.5zM12 17c-2.76 0-5-2.24-5-5s2.24-5 5-5 5 2.24 5 5-2.24 5-5 5zm0-8c-1.66 0-3 1.34-3 3s1.34 3 3 3 3-1.34 3-3-1.34-3-3-3z"/></g></svg>
<svg class="i" style="left:0;top:0;width:1px;height:1px;"><polygon points="1476.30,694.80 1488.20,700.40 1488.20,713.50 1475.50,719.40 1464.00,713.50 1464.00,700.80" fill="#eeeffa"/><polygon points="1469.30,700.90 1475.90,698.30 1482.80,701.20 1476.30,703.90" fill="#474d5d"/><polygon points="1477.30,706.80 1485.00,703.30 1485.00,711.90 1477.30,715.40" fill="#474d5d"/></svg>
<span class="t " style="left:1498.9px;top:697.00px;font-size:23.69px;color:#cacad4;transform:scaleX(0.9343);">cube</span>
<svg class="i" style="left:0;top:0;width:1px;height:1px;" fill="#8b8e98" color="#8b8e98"><g transform="translate(1747.36,734.36) scale(1.2200,1.2200)"><path fill-rule="evenodd" d="M12 2a10 10 0 1 0 0 20a10 10 0 1 0 0-20z M12 3.700a8.300 8.300 0 1 1 0 16.600a8.300 8.300 0 1 1 0-16.600z"/><path d="M9.100 7.900L12 10.800l2.900-2.900 1.200 1.200L13.200 12l2.900 2.900-1.200 1.200L12 13.200 9.100 16.100 7.900 14.900 10.800 12 7.900 9.100z"/></g></svg>
<svg class="i" style="left:0;top:0;width:1px;height:1px;" fill="#cacad4" color="#cacad4"><g transform="translate(1777.59,735.53) scale(1.2050,1.1842)"><path d="M12 17.270L18.180 21l-1.640-7.030L22 9.240l-7.190-.610L12 2 9.190 8.630 2 9.240l5.460 4.730L5.820 21z" stroke="currentColor" stroke-width="1.300" stroke-linejoin="round"/></g></svg>
<svg class="i" style="left:0;top:0;width:1px;height:1px;" fill="#cacad4" color="#cacad4"><g transform="translate(1807.45,734.61) scale(1.2167,1.1972)"><path fill-rule="evenodd" d="M5 3h14a2 2 0 0 1 2 2v14a2 2 0 0 1-2 2H5a2 2 0 0 1-2-2V5a2 2 0 0 1 2-2z M5.400 5.100v13.800h13.200V5.100z"/><path d="M10.600 16.400L6.800 12.600l1.450-1.450 2.350 2.350 5.150-5.150L17.200 9.800z"/></g></svg>
<svg class="i" style="left:0;top:0;width:1px;height:1px;" fill="#7f838d" color="#7f838d"><g transform="translate(1832.25,735.10) scale(1.5000,1.2000)"><rect x="4" y="9" width="14.500" height="12.500" rx="1.800"/></g></svg>
<svg class="i" style="left:0;top:0;width:1px;height:1px;" fill="#7f838d" color="#7f838d"><g transform="translate(1835.00,735.00) scale(1.3600,1.4000)"><path d="M12.500 9V6.500a5 5 0 0 1 10 0V7.600h-2.100V6.500a2.900 2.900 0 0 0-5.800 0V9z"/></g></svg>
<svg class="i" style="left:0;top:0;width:1px;height:1px;" fill="#cacad4" color="#cacad4"><g transform="translate(1867.48,732.54) scale(1.2227,1.2133)"><path d="M12 4.5C7 4.5 2.73 7.61 1 12c1.73 4.39 6 7.5 11 7.5s9.27-3.11 11-7.5c-1.73-4.39-6-7.5-11-7.5zM12 17c-2.76 0-5-2.24-5-5s2.24-5 5-5 5 2.24 5 5-2.24 5-5 5zm0-8c-1.66 0-3 1.34-3 3s1.34 3 3 3 3-1.34 3-3-1.34-3-3-3z"/></g></svg>
<svg class="i" style="left:0;top:0;width:1px;height:1px;"><polygon points="1476.30,736.80 1488.20,742.40 1488.20,755.50 1475.50,761.40 1464.00,755.50 1464.00,742.80" fill="#eeeffa"/><polygon points="1469.30,742.90 1475.90,740.30 1482.80,743.20 1476.30,745.90" fill="#474d5d"/><polygon points="1477.30,748.80 1485.00,745.30 1485.00,753.90 1477.30,757.40" fill="#474d5d"/></svg>
<span class="t " style="left:1498.9px;top:739.00px;font-size:23.69px;color:#cacad4;transform:scaleX(0.9343);">cube</span>
<svg class="i" id="vp" style="left:552px;top:135px;width:855px;height:831px;overflow:hidden" viewBox="0 0 855 831">
<defs><pattern id="ck" width="45" height="45" patternUnits="userSpaceOnUse"><rect width="45" height="45" fill="#1c1f26"/><rect width="22.5" height="22.5" fill="#181b23"/><rect x="22.5" y="22.5" width="22.5" height="22.5" fill="#181b23"/></pattern></defs>
<rect width="855" height="831" fill="url(#ck)"/>
<line x1="-4189.3" y1="30567.0" x2="1562.6" y2="728.9" stroke="#40465a" stroke-width="1.0" />
<line x1="-4189.3" y1="30567.0" x2="-609.6" y2="620.5" stroke="#40465a" stroke-width="1.0" />
<line x1="-764.7" y1="1918.0" x2="988.7" y2="508.5" stroke="#40465a" stroke-width="1.0" />
<line x1="1274.9" y1="2220.9" x2="-101.5" y2="468.1" stroke="#40465a" stroke-width="1.0" />
<line x1="-649.7" y1="955.8" x2="662.2" y2="383.2" stroke="#40465a" stroke-width="1.0" />
<line x1="1487.9" y1="1116.4" x2="224.5" y2="370.3" stroke="#40465a" stroke-width="1.0" />
<line x1="-609.6" y1="620.5" x2="451.4" y2="302.3" stroke="#40465a" stroke-width="1.0" />
<line x1="1562.6" y1="728.9" x2="451.4" y2="302.3" stroke="#40465a" stroke-width="1.0" />
<line x1="312.6" y1="995.5" x2="735.8" y2="672.3" stroke="#4e5468" stroke-width="1.1" />
<line x1="377.1" y1="1000.2" x2="73.9" y2="640.0" stroke="#4e5468" stroke-width="1.1" />
<line x1="287.0" y1="962.9" x2="708.7" y2="656.3" stroke="#4e5468" stroke-width="1.1" />
<line x1="412.4" y1="971.8" x2="102.9" y2="627.3" stroke="#4e5468" stroke-width="1.1" />
<line x1="263.0" y1="932.3" x2="682.7" y2="640.9" stroke="#4e5468" stroke-width="1.1" />
<line x1="445.9" y1="944.8" x2="130.9" y2="615.1" stroke="#4e5468" stroke-width="1.1" />
<line x1="240.3" y1="903.4" x2="657.8" y2="626.2" stroke="#4e5468" stroke-width="1.1" />
<line x1="477.8" y1="919.3" x2="158.0" y2="603.3" stroke="#4e5468" stroke-width="1.1" />
<line x1="218.9" y1="876.1" x2="633.9" y2="612.1" stroke="#4e5468" stroke-width="1.1" />
<line x1="508.1" y1="894.9" x2="184.1" y2="591.8" stroke="#4e5468" stroke-width="1.1" />
<line x1="198.7" y1="850.4" x2="610.9" y2="598.5" stroke="#4e5468" stroke-width="1.1" />
<line x1="536.9" y1="871.7" x2="209.4" y2="580.8" stroke="#4e5468" stroke-width="1.1" />
<line x1="179.5" y1="825.9" x2="588.9" y2="585.5" stroke="#4e5468" stroke-width="1.1" />
<line x1="564.4" y1="849.6" x2="233.9" y2="570.1" stroke="#4e5468" stroke-width="1.1" />
<line x1="161.3" y1="802.8" x2="567.6" y2="573.0" stroke="#4e5468" stroke-width="1.1" />
<line x1="590.6" y1="828.6" x2="257.6" y2="559.8" stroke="#4e5468" stroke-width="1.1" />
<line x1="144.0" y1="780.8" x2="547.2" y2="560.9" stroke="#4e5468" stroke-width="1.1" />
<line x1="615.7" y1="808.4" x2="280.6" y2="549.8" stroke="#4e5468" stroke-width="1.1" />
<line x1="127.6" y1="759.9" x2="527.5" y2="549.3" stroke="#4e5468" stroke-width="1.1" />
<line x1="639.7" y1="789.1" x2="302.8" y2="540.0" stroke="#4e5468" stroke-width="1.1" />
<line x1="111.9" y1="739.9" x2="508.5" y2="538.1" stroke="#4e5468" stroke-width="1.1" />
<line x1="662.6" y1="770.7" x2="324.4" y2="530.6" stroke="#4e5468" stroke-width="1.1" />
<line x1="97.0" y1="721.0" x2="490.2" y2="527.2" stroke="#4e5468" stroke-width="1.1" />
<line x1="684.6" y1="753.0" x2="345.3" y2="521.5" stroke="#4e5468" stroke-width="1.1" />
<line x1="82.8" y1="702.8" x2="472.5" y2="516.8" stroke="#4e5468" stroke-width="1.1" />
<line x1="705.7" y1="736.0" x2="365.6" y2="512.6" stroke="#4e5468" stroke-width="1.1" />
<line x1="69.2" y1="685.5" x2="455.5" y2="506.7" stroke="#4e5468" stroke-width="1.1" />
<line x1="726.0" y1="719.7" x2="385.3" y2="504.0" stroke="#4e5468" stroke-width="1.1" />
<line x1="56.2" y1="669.0" x2="439.0" y2="497.0" stroke="#4e5468" stroke-width="1.1" />
<line x1="745.5" y1="704.1" x2="404.4" y2="495.7" stroke="#4e5468" stroke-width="1.1" />
<line x1="43.8" y1="653.1" x2="423.0" y2="487.6" stroke="#4e5468" stroke-width="1.1" />
<line x1="764.2" y1="689.0" x2="423.0" y2="487.6" stroke="#4e5468" stroke-width="1.1" />
<line x1="339.8" y1="1030.1" x2="43.8" y2="653.1" stroke="#f5304a" stroke-width="1.5" />
<line x1="339.8" y1="1030.1" x2="764.2" y2="689.0" stroke="#2c5ce4" stroke-width="1.4" />
<polygon points="372.6,613.0 382.8,611.7 385.7,698.0 375.0,687.9" fill="#d9dce8" />
<polygon points="382.8,605.0 410.7,593.0 411.3,684.3 385.7,698.0" fill="#a7abb7" />
<polyline points="372.6,615.8 375.0,687.9 385.7,698.0 411.3,684.3 410.7,596.2" fill="none" stroke="#3e90ff" stroke-width="1.1" />
<line x1="382.8" y1="611.7" x2="385.7" y2="698.0" stroke="#3e90ff" stroke-width="1.6" />
<polygon points="326.5,554.4 369.9,586.0 452.6,546.1 406.0,519.1" fill="#fbfcff" />
<polygon points="326.5,554.4 369.9,586.0 371.1,615.7 327.6,582.4" fill="#dde1ec" />
<polygon points="369.9,586.0 452.6,546.1 453.2,574.0 371.1,615.7" fill="#a9adb9" />
<polygon points="356.8,541.9 374.7,533.6 375.9,556.2" fill="#dfe2ee" />
<polygon points="403.8,527.0 423.0,535.0 403.8,543.5" fill="#e6e9f3" />
<polyline points="406.0,519.1 326.5,554.4 369.9,586.0 452.6,546.1 406.0,519.1" fill="none" stroke="#3e90ff" stroke-width="1.0" />
<polyline points="326.5,554.4 327.6,582.4 371.1,615.7 453.2,574.0 452.6,546.1" fill="none" stroke="#3e90ff" stroke-width="1.0" />
<line x1="369.9" y1="586.0" x2="371.1" y2="615.7" stroke="#3e90ff" stroke-width="1.0" />
<polygon points="364.0,117.6 399.1,113.1 403.8,543.1 376.5,556.2" fill="#a2a7b2" />
<line x1="364.0" y1="117.6" x2="376.5" y2="556.2" stroke="#3e90ff" stroke-width="2.0" />
<line x1="399.1" y1="113.1" x2="403.8" y2="543.1" stroke="#6fa5f5" stroke-width="1.4" />
<line x1="364.0" y1="117.6" x2="399.1" y2="113.1" stroke="#3e90ff" stroke-width="1.4" />
<polygon points="346.3,420.4 372.2,433.6 373.0,471.0 347.6,457.4" fill="#2748a5" opacity="0.8"/>
<polygon points="405.4,437.6 440.9,423.6 440.9,462.2 406.0,477.0" fill="#a3283b" opacity="0.85"/>
<polygon points="398.5,458.9 425.9,473.8 396.7,485.5 366.3,472.0" fill="#2fd24f" opacity="0.62"/>
<line x1="314.4" y1="457.5" x2="482.6" y2="563.7" stroke="#fd3043" stroke-width="1.4" />
<line x1="271.0" y1="556.0" x2="487.1" y2="461.5" stroke="#2d5ee8" stroke-width="1.5" />
<line x1="386.9" y1="376.0" x2="391.6" y2="617.0" stroke="#26ec45" stroke-width="1.4" />
<circle cx="389.5" cy="504.2" r="19.6" fill="none" stroke="#3e8bf5" stroke-width="1.8"/>
<polygon points="291.6,443.6 310.3,436.8 314.4,439.1 314.4,457.5 296.9,464.1 292.5,461.1" fill="#fd3043" />
<polygon points="482.6,563.7 502.4,554.2 508.0,557.8 508.0,577.6 489.5,588.5 482.6,583.6" fill="#fd3043" />
<polygon points="248.2,547.1 255.9,543.6 271.0,553.9 271.6,574.8 263.9,578.9 250.1,568.2" fill="#2d5ee8" />
<polygon points="487.5,445.7 493.5,442.7 508.4,451.0 508.4,468.5 503.0,471.5 487.1,462.5" fill="#2d5ee8" />
<polygon points="388.3,354.4 403.4,361.6 403.4,369.5 386.7,376.3 369.7,369.1 369.7,361.2" fill="#26ec45" />
<polygon points="392.9,614.6 406.6,622.4 406.6,629.5 391.1,638.5 376.8,628.9 376.8,621.8" fill="#26ec45" />
<polyline points="88.8,825.4 138.6,798.6 117.0,835.0" fill="none" stroke="#4c5264" stroke-width="3.0" stroke-linejoin="round" stroke-linecap="round"/>
<line x1="158.2" y1="823.1" x2="141.0" y2="832.0" stroke="#4c5264" stroke-width="3.0" stroke-linecap="round"/>
<line x1="794.6" y1="771.0" x2="768.0" y2="757.0" stroke="#8c2534" stroke-width="3.2" />
<line x1="794.6" y1="771.0" x2="827.0" y2="759.1" stroke="#263f8c" stroke-width="3.2" />
<line x1="794.6" y1="771.0" x2="795.0" y2="733.0" stroke="#1d8a30" stroke-width="3.2" />
<circle cx="768.0" cy="757.0" r="10.3" fill="#8c2534"/>
<circle cx="827.0" cy="759.1" r="10.7" fill="#263f8c"/>
<circle cx="795.0" cy="733.0" r="13" fill="#22a33a"/>
<circle cx="763.1" cy="783.0" r="13.3" fill="#2c4ba8"/>
<circle cx="821.8" cy="784.9" r="13.5" fill="#b02a3c"/>
<circle cx="795.0" cy="808.8" r="11" fill="#1f7a30"/>
<text x="795.0" y="739.6" font-size="19" text-anchor="middle" fill="#14161b" font-family="Liberation Sans, sans-serif">Y</text>
<text x="768.0" y="762.6" font-size="16" text-anchor="middle" fill="#14161b" font-family="Liberation Sans, sans-serif">X</text>
<text x="827.0" y="764.7" font-size="16" text-anchor="middle" fill="#14161b" font-family="Liberation Sans, sans-serif">Z</text>
</svg>
<svg class="i" style="left:0;top:0;width:1920px;height:1008px;pointer-events:none" viewBox="0 0 1920 1008">
<polygon points="1286.9,467.2 1463,547 1458.9,542 1476.3,562.3 1449.2,562.9 1453.8,558.6" fill="#ff1414" stroke="#7a0000" stroke-width="0.6"/>
<polygon points="1326.3,608.7 1388.3,584.3 1378.6,578.8 1406.8,581.4 1384.7,600.5 1386.6,594" fill="#ff1414" stroke="#7a0000" stroke-width="0.6"/>
<rect x="1412.5" y="561" width="46.5" height="34.8" rx="5" fill="none" stroke="#ff1414" stroke-width="2"/>
<rect x="1474.3" y="561" width="41" height="36.8" rx="5" fill="none" stroke="#ff1414" stroke-width="2"/>
<text x="1168" y="456.5" style="font-family:'Noto Sans CJK JP',sans-serif;font-size:29.5px;font-weight:400;fill:#ff1414;stroke:#ff1414;stroke-width:0.35px;paint-order:stroke" textLength="186" lengthAdjust="spacingAndGlyphs">グループを追加</text>
<text x="1171.5" y="642" style="font-family:'Noto Sans CJK JP',sans-serif;font-size:29.5px;font-weight:400;fill:#ff1414;stroke:#ff1414;stroke-width:0.35px;paint-order:stroke" textLength="183.5" lengthAdjust="spacingAndGlyphs">キューブを追加</text>
</svg>
<div class="b" style="left:1249px;top:135px;width:159.5px;height:45px;background:#1d2027;"></div>
<svg class="i" style="left:0;top:0;width:1px;height:1px;" fill="#cacad4" color="#cacad4"><g transform="translate(1263.96,140.20) scale(1.4306,1.4333)"><path d="M5 21q-.825 0-1.413-.587Q3 19.825 3 19V5q0-.825.587-1.413Q4.175 3 5 3h14q.825 0 1.413.587Q21 4.175 21 5v14q0 .825-.587 1.413Q19.825 21 19 21Zm1-4h12l-3.750-5-3 4L9 13Z"/></g></svg>
<svg class="i" style="left:0;top:0;width:1px;height:1px;"><circle cx="1331.9" cy="157.4" r="8.600" fill="#cacad4"/><g stroke="#cacad4" stroke-width="3.200"><line x1="1342.50" y1="157.40" x2="1347.50" y2="157.40"/><line x1="1339.82" y1="165.32" x2="1342.22" y2="167.72"/><line x1="1331.90" y1="168.00" x2="1331.90" y2="173.00"/><line x1="1323.98" y1="165.32" x2="1321.58" y2="167.72"/><line x1="1321.30" y1="157.40" x2="1316.30" y2="157.40"/><line x1="1323.98" y1="149.48" x2="1321.58" y2="147.08"/><line x1="1331.90" y1="146.80" x2="1331.90" y2="141.80"/><line x1="1339.82" y1="149.48" x2="1342.22" y2="147.08"/></g></svg>
<div class="b" style="left:1307.8px;top:175.8px;width:48.299999999999955px;height:4.399999999999977px;background:#3e90ff;"></div>
<div class="b" style="left:1371.75px;top:148.75px;width:25.549999999999955px;height:3.5500000000000114px;background:#cacad4;"></div>
<div class="b" style="left:1371.75px;top:155.8px;width:25.549999999999955px;height:3.4499999999999886px;background:#cacad4;"></div>
<div class="b" style="left:1371.75px;top:162.8px;width:25.549999999999955px;height:3.5999999999999943px;background:#cacad4;"></div>
</div></body></html>
